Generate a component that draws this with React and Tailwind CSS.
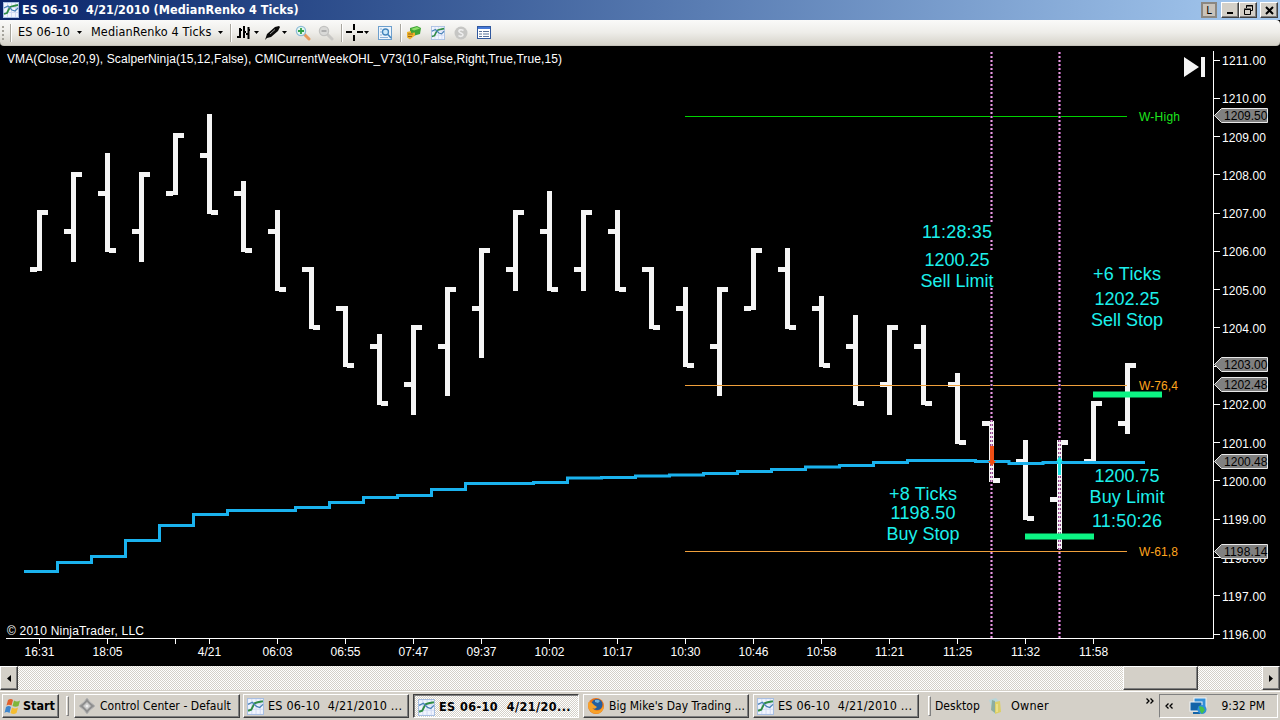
import clsx from 'clsx'

const UI_FONT = "font-['DejaVu_Sans_Condensed','DejaVu_Sans',sans-serif]"

// one entry per bar: stem top, stem bottom, open tick, close tick
const BARS = [
  [210, 271, 267, 210],
  [172, 262, 229, 172],
  [153, 252, 191, 248],
  [172, 262, 229, 172],
  [133, 195, 191, 133],
  [114, 214, 153, 210],
  [181, 252, 191, 248],
  [210, 291, 229, 287],
  [267, 329, 267, 325],
  [306, 367, 306, 363],
  [334, 405, 344, 401],
  [325, 415, 382, 325],
  [287, 396, 344, 287],
  [248, 358, 306, 248],
  [210, 291, 267, 210],
  [191, 291, 229, 287],
  [210, 291, 267, 210],
  [210, 291, 229, 287],
  [267, 329, 267, 325],
  [287, 367, 306, 363],
  [287, 396, 344, 287],
  [248, 310, 306, 248],
  [248, 329, 267, 325],
  [296, 367, 306, 363],
  [315, 405, 344, 401],
  [325, 415, 382, 325],
  [325, 405, 344, 401],
  [373, 444, 382, 440],
  [421, 482, 421, 478],
  [440, 520, 459, 516],
  [440, 549, 497, 440],
  [401, 461, 459, 401],
  [363, 434, 421, 363],
]

const VMA =
  'M24 571.5H57.5V562.5H91.5V556.5H125.5V540.5H159.5V525.5H193.5V514.5H227.5V510.5H295.5V507.5H329.5V502.5H363.5V497.5H397.5V495.5H431.5V489.5H465.5V483.5H533.5V482.5H567.5V478H601.5V477.5H635.5V476H669.5V475H703.5V473.5H737.5V471.5H771.5V469.5H805.5V467H839.5V465.5H873.5V462.5H907.5V460.5H975.5V461.5H1009V463.5H1043V462.5H1145'

const TIMES = [
  [39, '16:31'],
  [107, '18:05'],
  [175, ''],
  [209, '4/21'],
  [277, '06:03'],
  [345, '06:55'],
  [413, '07:47'],
  [481, '09:37'],
  [549, '10:02'],
  [617, '10:17'],
  [685, '10:30'],
  [753, '10:46'],
  [821, '10:58'],
  [889, '11:21'],
  [957, '11:25'],
  [1025, '11:32'],
  [1093, '11:58'],
]

const PRICES = Array.from({ length: 16 }, (_, i) => 1211 - i)

const MARKERS = [
  [115.5, '1209.50'],
  [364.5, '1203.00'],
  [384.5, '1202.48'],
  [461.5, '1200.48'],
  [551.5, '1198.14'],
]

const NOTES = [
  [957, 238, '11:28:35', 70],
  [957, 266, '1200.25', 65],
  [957, 287, 'Sell Limit', 73],
  [1127, 280, '+6 Ticks', 68],
  [1127, 305, '1202.25', 65],
  [1127, 326, 'Sell Stop', 72],
  [1127, 482, '1200.75', 65],
  [1127, 503, 'Buy Limit', 75],
  [1127, 527, '11:50:26', 70],
  [923, 500, '+8 Ticks', 68],
  [923, 519, '1198.50', 65],
  [923, 540, 'Buy Stop', 73],
]

function ChartIcon({ size = 16 }) {
  return (
    <svg width={size} height={size} viewBox="0 0 16 16" className="shrink-0">
      <rect x="0.5" y="0.5" width="15" height="15" fill="#f1f5fd" stroke="#a9bfe2" />
      <path d="M4.5 1v14M8.5 1v14M12.5 1v14M1 5.5h14M1 10.5h14" stroke="#d3dcf5" />
      <path d="M1 12l3-1 3-6 3-1 5-1" fill="none" stroke="#2f8c45" strokeWidth="1.8" />
      <path d="M1 6l4-2 4 4 3 1 3-3" fill="none" stroke="#4a83b8" strokeWidth="1.3" />
    </svg>
  )
}

function Caret() {
  return (
    <svg width="5" height="3" viewBox="0 0 5 3" className="shrink-0">
      <path d="M0 0h5L2.5 3z" fill="#000" />
    </svg>
  )
}

function Separator({ className }) {
  return <div className={clsx('h-4.5 w-px bg-[#a8a69e] shadow-[1px_0_0_#fff]', className)} />
}

function Magnifier({ sign, disabled }) {
  return (
    <svg width="16" height="16" viewBox="0 0 16 16">
      <path d="M9 9l5 5" stroke={disabled ? '#c9c8c5' : '#e79a5c'} strokeWidth="3" strokeLinecap="round" />
      <circle cx="6" cy="6" r="4.6" fill={disabled ? '#d9d9d7' : '#e5f6ef'} stroke={disabled ? '#c2c2c0' : '#8dbbd8'} strokeWidth="1.3" />
      <path d={sign === '+' ? 'M6 3v6M3 6h6' : 'M3.5 6h5'} stroke={disabled ? '#aaa' : '#2fa34a'} strokeWidth="1.8" />
    </svg>
  )
}

function WindowButton({ children, className }) {
  return (
    <div
      className={clsx(
        'flex h-4 w-[18px] items-center justify-center border border-t-white border-r-[#404040] border-b-[#404040] border-l-white bg-[#d4d0c8] shadow-[inset_-1px_-1px_0_#808080]',
        className,
      )}
    >
      {children}
    </div>
  )
}

function TitleBar() {
  return (
    <div className="flex h-5 items-center bg-linear-to-r from-[#0a246a] to-[#a6caf0] pr-0.5 pl-[3px]">
      <ChartIcon />
      <span className="ml-[3px] text-[12.5px] leading-5 font-bold tracking-[0.06px] whitespace-pre text-white">
        ES 06-10  4/21/2010 (MedianRenko 4 Ticks)
      </span>
      <div className="ml-auto flex items-center">
        <div className="flex h-4 w-4 items-center justify-center border-2 border-[#8b8781] bg-[#c9c3bb] text-[11px] leading-none">
          L
        </div>
        <WindowButton className="ml-1">
          <svg width="11" height="9" viewBox="0 0 11 9">
            <path d="M2 7h6" stroke="#000" strokeWidth="2" />
          </svg>
        </WindowButton>
        <WindowButton>
          <svg width="11" height="10" viewBox="0 0 11 10" fill="none" stroke="#000">
            <path d="M3.500 3V.5h6v5H7.500M3 1h7M1.500 4.500h6v5h-6zM1 4h7" />
          </svg>
        </WindowButton>
        <WindowButton className="ml-[3px]">
          <svg width="11" height="9" viewBox="0 0 11 9">
            <path d="M2 1l7 7M9 1L2 8" stroke="#000" strokeWidth="2" />
          </svg>
        </WindowButton>
      </div>
    </div>
  )
}

function Toolbar() {
  return (
    <div className="h-[26px] bg-black">
      <div className="flex h-full items-center rounded-r-[4px] rounded-bl-[4px] border-b border-[#c5c3ba] bg-linear-to-b from-[#fafaf9] via-[#eeede9] to-[#d6d3ca] text-[12.5px] text-black">
        <svg width="3" height="16" className="ml-0.5">
          <path d="M1 1v14" stroke="#a5a39c" strokeWidth="2" strokeDasharray="2 2" />
        </svg>
        <Separator className="ml-[5px]" />
        <span className="ml-[7px] w-[53px] tracking-[0.2px] whitespace-nowrap">ES 06-10</span>
        <span className="ml-[6px]"><Caret /></span>
        <span className="ml-[9px] w-[121px] tracking-[0.15px] whitespace-nowrap">MedianRenko 4 Ticks</span>
        <span className="ml-[6px]"><Caret /></span>
        <Separator className="ml-[7px]" />
        <svg width="14" height="16" viewBox="0 0 14 16" className="ml-[6px]">
          <path d="M3 3v10M7 1v12M11.500 2v12M0 12h3M3 5h2M7 7h2M9 9h2.500M11 5h2" stroke="#000" strokeWidth="2" />
        </svg>
        <span className="ml-[3px]"><Caret /></span>
        <svg width="18" height="16" viewBox="0 0 18 16" className="ml-[5px]">
          <path d="M1 15l2-6 8-7 4-1 1 1-2 4-7 6-4 1z" fill="#0a0a0a" />
          <path d="M6 9l5-4.500" stroke="#999" />
        </svg>
        <span><Caret /></span>
        <span className="ml-[8px]"><Magnifier sign="+" /></span>
        <span className="ml-[7px]"><Magnifier sign="-" disabled /></span>
        <Separator className="ml-[7px]" />
        <svg width="17" height="17" viewBox="0 0 17 17" className="ml-[4px]">
          <path d="M8 0v6M8 11v6M0 8h6M11 8h6" stroke="#000" strokeWidth="2" />
        </svg>
        <span className="ml-px"><Caret /></span>
        <svg width="14" height="14" viewBox="0 0 14 14" className="ml-[9px]">
          <rect x="0.500" y="0.500" width="13" height="13" fill="#eef5fc" stroke="#6d9fcd" />
          <path d="M2 3h2M2 6h2M2 9h2M2 11.500h8" stroke="#8db2d8" />
          <circle cx="7.500" cy="6" r="3" fill="#cce9fb" stroke="#4385bd" strokeWidth="1.300" />
          <path d="M10 8.500l3 3.500" stroke="#4385bd" strokeWidth="1.600" />
        </svg>
        <Separator className="ml-[8px]" />
        <svg width="15" height="14" viewBox="0 0 15 14" className="ml-[6px]">
          <path d="M3 2l7-2 4 2-1 6-7 2-3-3z" fill="#3ea436" />
          <path d="M4 3l6-2 3 1.500-6 2z" fill="#8ddf69" />
          <path d="M0 6l4-1v2l4-.5v3L6 11l-3 2.500-3-2z" fill="#eeb22b" />
          <path d="M1 8h5M1 10.500h4" stroke="#9a6417" />
        </svg>
        <span className="ml-[9px]"><ChartIcon size={14} /></span>
        <svg width="14" height="14" viewBox="0 0 14 14" className="ml-[9px]">
          <circle cx="7" cy="7" r="6.500" fill="#c6c6c4" />
          <path d="M9.500 4.500C7 3 4.500 4 5 5.500s4 1.500 4 3.200S6 11 4.500 9.500" fill="none" stroke="#eee" strokeWidth="1.600" />
        </svg>
        <svg width="14" height="13" viewBox="0 0 14 13" className="ml-[9px]">
          <rect x="0.500" y="0.500" width="13" height="12" fill="#fff" stroke="#30589e" />
          <path d="M1 2h12" stroke="#4779d8" strokeWidth="2" />
          <path d="M2 5.500h3M6 5.500h6M2 8h3M6 8h6M2 10.500h3M6 10.500h6" stroke="#5b7298" />
        </svg>
      </div>
    </div>
  )
}

function PriceAxis() {
  return (
    <g>
      <path d="M1213.500 51V639" stroke="#fff" />
      {PRICES.map((price, i) => {
        const y = 60 + i * 38.27
        return (
          <g key={price}>
            <path d={`M1214 ${Math.floor(y) + 0.5}h6`} stroke="#fff" />
            {/* the last price marker sits on 1203 and replaces its label */}
            {price !== 1203 && (
              <text x="1222" y={y + 5} fill="#fff" textLength="44">
                {price}.00
              </text>
            )}
          </g>
        )
      })}
      {MARKERS.map(([y, label]) => (
        <g key={label}>
          <path d={`M1214.500 ${y}l7-7h46v14h-46z`} fill="#808080" stroke="#e8e8e8" />
          <text x="1224" y={y + 4.5} fill="#000" textLength="43.500">
            {label}
          </text>
        </g>
      ))}
    </g>
  )
}

function TradeLine({ x }) {
  return (
    <g strokeDasharray="2 2">
      <path d={`M${x} 52V639`} stroke="#8a4c88" strokeWidth="3" />
      <path d={`M${x} 52V639`} stroke="#e3a6dd" strokeWidth="1" />
    </g>
  )
}

function Chart() {
  return (
    <svg
      width="1280"
      height="620"
      viewBox="0 46 1280 620"
      className="block bg-black font-['Liberation_Sans',Arial,sans-serif] text-[12px]"
    >
      <text x="7" y="63" fill="#fff" textLength="555">
        VMA(Close,20,9), ScalperNinja(15,12,False), CMICurrentWeekOHL_V73(10,False,Right,True,True,15)
      </text>
      <text x="7" y="635" fill="#fff" textLength="137">
        © 2010 NinjaTrader, LLC
      </text>
      <path d="M1184 57l15 10-15 10zM1201 57h4v20h-4z" fill="#f5f5f5" />

      {BARS.map(([top, bottom, open, close], i) => {
        const x = 37 + i * 34
        return (
          <g key={i} fill="#f5f5f5" shapeRendering="crispEdges">
            <rect x={x} y={top} width="5" height={bottom - top} />
            <rect x={x - 7} y={open} width="7" height="5" />
            <rect x={x + 4} y={close} width="7" height="5" />
          </g>
        )
      })}

      <path d="M685 116.500H1127" stroke="#00d200" />
      <path d="M685 385.500H1127M685 551.500H1127" stroke="#f0a03c" />
      <text x="1139" y="121" fill="#1ee61e" textLength="41">W-High</text>
      <text x="1139" y="390" fill="#ffa51e" textLength="39">W-76,4</text>
      <text x="1139" y="556" fill="#ffa51e" textLength="39">W-61,8</text>

      <path d={VMA} fill="none" stroke="#1ab2ee" strokeWidth="3" />
      <TradeLine x={991.5} />
      <TradeLine x={1059.5} />

      <path d="M990 446h4v15h2l-4 5-4-5h2z" fill="#f04e14" />
      <path d="M1058 475v-13h-2l3.500-6 3.500 6h-2v13z" fill="#19e6e6" />
      <path d="M1025 533.500h69v6h-69zM1093 391.500h69v6h-69z" fill="#0cf584" />

      <rect x="985" y="222" width="9" height="18" fill="#000" />
      <rect x="985" y="250" width="9" height="38" fill="#000" />
      {NOTES.map(([x, y, text, width]) => (
        <text
          key={text}
          x={x}
          y={y}
          textAnchor="middle"
          textLength={width}
          className="text-[18px]"
          fill="#1cf0ec"
        >
          {text}
        </text>
      ))}

      <path d="M6 638.500H1214" stroke="#fff" />
      {TIMES.map(([x, label]) => (
        <g key={x}>
          <path d={`M${x + 0.5} 639v5`} stroke="#fff" />
          <text x={x + 0.5} y="656" fill="#fff" textAnchor="middle">
            {label}
          </text>
        </g>
      ))}
      <PriceAxis />
    </svg>
  )
}

const RAISED =
  'border border-t-white border-l-white border-r-[#404040] border-b-[#404040] bg-[#d4d0c8] shadow-[inset_-1px_-1px_0_#808080]'
const DITHER = 'bg-[conic-gradient(#fff_25%,#d4d0c8_0_50%,#fff_0_75%,#d4d0c8_0)] bg-size-[2px_2px]'

function ScrollBar() {
  return (
    <div className={clsx('flex h-6', DITHER)}>
      <div className={clsx('flex w-[18px] items-center justify-center', RAISED)}>
        <svg width="4" height="7" viewBox="0 0 4 7">
          <path d="M4 0v7L0 3.500z" />
        </svg>
      </div>
      <div className={clsx('ml-[1105px] w-[75px]', RAISED)} />
      <div className={clsx('ml-auto flex w-[18px] items-center justify-center', RAISED)}>
        <svg width="4" height="7" viewBox="0 0 4 7">
          <path d="M0 0v7l4-3.500z" />
        </svg>
      </div>
    </div>
  )
}

function TaskButton({ icon, children, active, className }) {
  return (
    <div
      className={clsx(
        'flex h-6 w-[166px] items-center gap-1 whitespace-pre',
        active
          ? 'border border-t-[#404040] border-r-white border-b-white border-l-[#404040] pt-0.5 pl-1 font-bold shadow-[inset_1px_1px_0_#808080]'
          : RAISED,
        active ? DITHER : 'pl-[3px]',
        className,
      )}
    >
      {icon}
      {children}
    </div>
  )
}

function Grip({ className }) {
  return <div className={clsx('h-5 w-[3px] border border-t-white border-r-[#808080] border-b-[#808080] border-l-white', className)} />
}

function Taskbar() {
  return (
    <div className="flex h-[30px] items-center border-t border-[#d4d0c8] bg-[#d4d0c8] pt-px text-[12px] text-black shadow-[inset_0_1px_0_#fff]">
      <div className={clsx('ml-0.5 flex h-6 w-[57px] items-center gap-0.5 pl-px font-bold', RAISED)}>
        <svg width="17" height="17" viewBox="0 0 17 17" className="shrink-0">
          <path d="M4 2q3-2 5 0L7.500 7.500q-3-1.500-5 0z" fill="#e2602b" />
          <path d="M10 2.500q3 2 6 0L14.500 8q-3 1.500-6 0z" fill="#7fb63a" />
          <path d="M2 9q3-2 5 0l-1.500 6q-3-2-5 0z" fill="#3d86ce" />
          <path d="M8 9.500q3 2 6 0L12.500 15q-3 2-6 0z" fill="#f5bd31" />
        </svg>
        <span className="text-[12.5px]">Start</span>
      </div>
      <Grip className="ml-[7px]" />
      <TaskButton
        className="ml-[5px]"
        icon={
          <svg width="18" height="18" viewBox="0 0 18 18" className="shrink-0">
            <path d="M9 1l3 4 5 4-5 4-3 4-3-4-5-4 5-4z" fill="#8f8f8f" stroke="#b5b5b5" />
            <path d="M9 5l4 4-4 4-4-4z" fill="#c9c9c9" />
            <circle cx="9" cy="9" r="1.500" fill="#eee" />
          </svg>
        }
      >
        <span className="tracking-[0.08px]">Control Center - Default</span>
      </TaskButton>
      <TaskButton className="ml-[3px]" icon={<ChartIcon size={17} />}>
        <span className="text-[12.5px] tracking-[0.2px]">ES 06-10  4/21/2010 ...</span>
      </TaskButton>
      <TaskButton active className="ml-[4px]" icon={<ChartIcon size={17} />}>
        <span className="text-[12.5px] tracking-[0.42px]">ES 06-10  4/21/20...</span>
      </TaskButton>
      <TaskButton
        className="ml-[4px]"
        icon={
          <svg width="18" height="18" viewBox="0 0 18 18" className="shrink-0">
            <circle cx="9" cy="9" r="8" fill="#e8721b" />
            <circle cx="10" cy="7.500" r="5.500" fill="#245f9f" />
            <path d="M8 3q3-1 5 1l-2 2-3-1z" fill="#75b5dd" />
            <path d="M1.500 5Q5 5 7 8l3 2q-2 3-5 1 3 4 8 2 4-3 3-7 2 7-3 10-5 2-9-1Q0 11 1.500 5z" fill="#f7a229" />
          </svg>
        }
      >
        <span className="tracking-[0.02px]">Big Mike's Day Trading ...</span>
      </TaskButton>
      <TaskButton className="ml-[4px]" icon={<ChartIcon size={17} />}>
        <span className="text-[12.5px] tracking-[0.2px]">ES 06-10  4/21/2010 ...</span>
      </TaskButton>
      <Grip className="ml-[9px]" />
      <span className="ml-[4px] w-[45px] tracking-[0.05px]">Desktop</span>
      <svg width="14" height="18" viewBox="0 0 14 18" className="ml-[8px]">
        <path d="M1 3l7-2 4 4v9l-6 3z" fill="#b8d6da" />
        <path d="M4 3l3 1v12l-4-3z" fill="#8dae9f" />
        <path d="M7 5l5-1 1 11-6 2z" fill="#dccf68" />
        <path d="M9 7v8" stroke="#f9f0a8" />
      </svg>
      <span className="ml-[9px] text-[12.5px] tracking-[0.2px]">Owner</span>
      <svg width="8" height="6" viewBox="0 0 8 6" className="mt-[-10px] ml-auto">
        <path d="M.5.500L3 3 .5 5.500M4.500.500L7 3 4.500 5.500" fill="none" stroke="#000" strokeWidth="1.300" />
      </svg>
      <div className="mr-0.5 ml-[5px] flex h-6 w-[119px] items-center border border-t-[#808080] border-r-white border-b-white border-l-[#808080]">
        <svg width="8" height="6" viewBox="0 0 8 6" className="ml-[5px]">
          <path d="M3.500.500L1 3l2.500 2.500M7.500.500L5 3l2.500 2.500" fill="none" stroke="#000" strokeWidth="1.300" />
        </svg>
        <svg width="19" height="18" viewBox="0 0 19 18" className="ml-[16px]">
          <rect x="5" y="1" width="12" height="9" fill="#338fd8" stroke="#f2f6f9" />
          <rect x="1" y="5" width="12" height="9" fill="#1464a8" stroke="#f2f6f9" />
          <path d="M4 16h7" stroke="#1464a8" strokeWidth="2" />
          <circle cx="13" cy="12.500" r="4.500" fill="#2c8edb" />
          <path d="M10 9l4 1 2 3-3 4-2-3z" fill="#45c04a" />
        </svg>
        <span className="ml-auto pr-3 whitespace-nowrap">9:32 PM</span>
      </div>
    </div>
  )
}

export default function App() {
  return (
    <div className={clsx('flex h-[720px] w-[1280px] flex-col overflow-hidden bg-black', UI_FONT)}>
      <TitleBar />
      <Toolbar />
      <Chart />
      <ScrollBar />
      <Taskbar />
    </div>
  )
}
